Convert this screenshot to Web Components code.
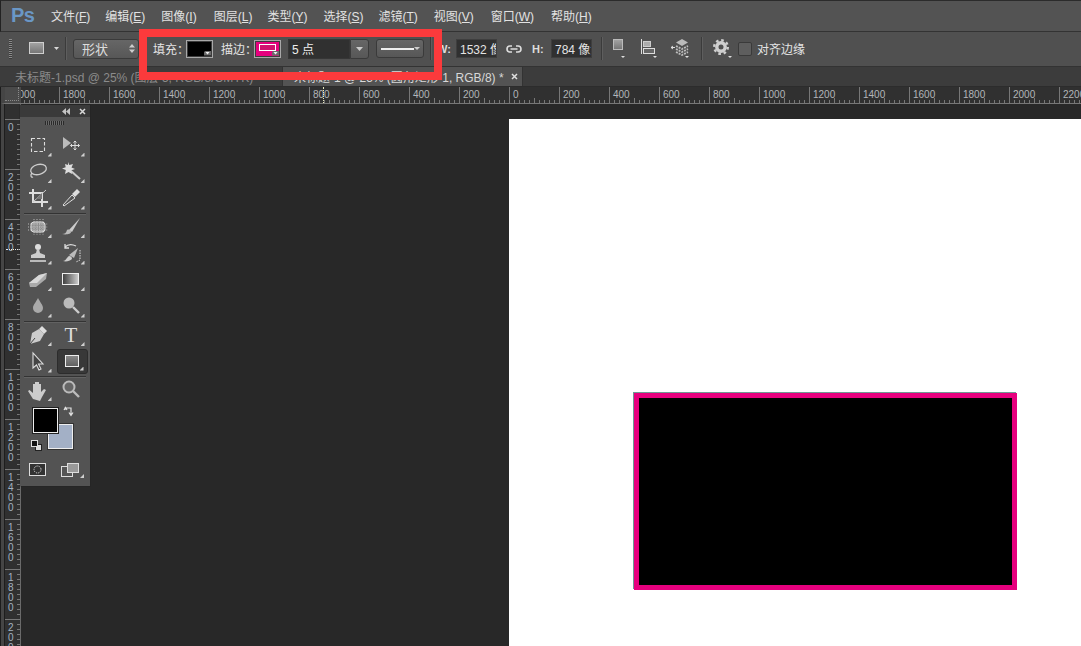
<!DOCTYPE html>
<html lang="zh">
<head>
<meta charset="utf-8">
<title>Photoshop</title>
<style>
  html, body { margin: 0; background: #282828; overflow: hidden; }
</style>
</head>
<body>
<ps-app>
  <ps-menubar></ps-menubar>
  <ps-options></ps-options>
  <ps-tabs></ps-tabs>
  <ps-workspace></ps-workspace>
</ps-app>
<script>
const FONT = '"Liberation Sans", "Noto Sans CJK SC", sans-serif';

class PsApp extends HTMLElement {
  connectedCallback() {
    this.attachShadow({ mode: 'open' });
    this.shadowRoot.innerHTML = `
      <style>
        :host { display: flex; flex-direction: column; position: relative; width: 1081px; height: 646px; overflow: hidden; font-family: ${FONT}; background: #282828; }
        .mark { position: absolute; left: 139px; top: 29px; width: 287px; height: 35px; border: 8px solid #fb3a3c; }
      </style>
      <slot></slot>
      <div class="mark"></div>
    `;
  }
}

class PsMenubar extends HTMLElement {
  connectedCallback() {
    const items = [['文件', 'F', 15], ['编辑', 'E', 16], ['图像', 'I', 17], ['图层', 'L', 15], ['类型', 'Y', 16], ['选择', 'S', 15], ['滤镜', 'T', 16], ['视图', 'V', 17], ['窗口', 'W', 17], ['帮助', 'H', 0]];
    this.attachShadow({ mode: 'open' });
    this.shadowRoot.innerHTML = `
      <style>
        :host { display: flex; align-items: center; box-sizing: border-box; height: 32px; padding-left: 11px; background: #535353; border-top: 1px solid #2b2b2b; border-left: 1px solid #222; border-bottom: 1px solid #333; }
        .logo { width: 40px; margin-left: -1px; margin-top: -2px; color: #6a97c6; font: bold 20px/22px "Liberation Sans", sans-serif; letter-spacing: -0.5px; }
        .item { color: #e2e2e2; font-size: 12px; white-space: nowrap; margin-top: -2px; }
        u { text-underline-offset: 1px; }
      </style>
      <span class="logo">Ps</span>
      ${items.map(i => `<span class="item" style="margin-right:${i[2]}px">${i[0]}(<u>${i[1]}</u>)</span>`).join('')}
    `;
  }
}

const CARET = (x, y) => `<path d="M${x} ${y}h5l-2.500 3z" fill="#d8d8d8"/>`;

class PsOptions extends HTMLElement {
  connectedCallback() {
    this.attachShadow({ mode: 'open' });
    this.shadowRoot.innerHTML = `
      <style>
        :host { display: flex; align-items: center; box-sizing: border-box; height: 35px; padding: 0 0 1px 9px; background: #505050; border-bottom: 1px solid #333; color: #e4e4e4; font-size: 12px; }
        .grip { width: 3px; height: 20px; margin-right: 17px; background: repeating-linear-gradient(#8a8a8a 0 1px, #3a3a3a 1px 2px); }
        .sep { width: 1px; height: 23px; background: #3b3b3b; box-shadow: 1px 0 0 #5e5e5e; }
        svg { display: block; flex: none; }
        .select { box-sizing: border-box; display: flex; align-items: center; justify-content: space-between; height: 20px; border: 1px solid #3a3a3a; border-radius: 3px; background: linear-gradient(#666, #575757); }
        .field { box-sizing: border-box; height: 19px; background: #303030; border: 1px solid #3e3e3e; display: flex; align-items: center; overflow: hidden; white-space: nowrap; }
        .swatch { box-sizing: border-box; position: relative; width: 27px; height: 18px; border: 1px solid #a8a8a8; outline: 1px solid #3c3c3c; outline-offset: -2px; background: #000; }
        .corner { position: absolute; right: 1px; bottom: 1px; width: 7px; height: 5px; background: #6a6a6a; clip-path: polygon(0 100%, 0 30%, 25% 0, 100% 0, 100% 100%); }
        .corner::after { content: ""; position: absolute; left: 1px; top: 1px; width: 5px; height: 3px; background: #eee; clip-path: polygon(0 0, 100% 0, 50% 100%); }
        .label { white-space: nowrap; }
        .check { box-sizing: border-box; width: 14px; height: 14px; border: 1px solid #3a3a3a; border-radius: 2px; background: #5e5e5e; }
      </style>
      <div class="grip"></div>
      <svg width="30" height="20" viewBox="0 0 30 20" style="margin-right:6px">
        <defs><linearGradient id="g1" x1="0" y1="0" x2="0" y2="1"><stop offset="0" stop-color="#a4a4a4"/><stop offset="1" stop-color="#747474"/></linearGradient></defs>
        <rect x="0.500" y="3.500" width="14" height="11" fill="url(#g1)" stroke="#cfcfcf"/>${CARET(25, 8)}
      </svg>
      <div class="sep" style="margin-right:7px"></div>
      <div class="select" style="width:66px;padding:0 3px 0 8px;margin-right:14px"><span style="color:#dcdcdc;font-size:13px">形状</span>
        <svg width="6" height="11" viewBox="0 0 6 11"><path d="M0 4.500 3 1l3 3.500zM0 6.500 3 10l3-3.500z" fill="#ccc"/></svg></div>
      <span class="label" style="width:33px">填充：</span>
      <div class="swatch" style="margin-right:8px"><div class="corner"></div></div>
      <span class="label" style="width:33px">描边：</span>
      <div class="swatch" style="background:#e6007e;margin-right:7px"><div style="box-sizing:border-box;width:17px;height:7px;margin:3px 0 0 4px;border:1px solid #fff;background:#d0126f"></div><div class="corner"></div></div>
      <div class="field" style="width:62px;height:20px;padding-left:3px;border-color:#363636;color:#eee;font-size:12px"><span>5 点</span></div>
      <div class="select" style="width:19px;justify-content:center;border-radius:0 3px 3px 0;margin-right:7px"><svg width="7" height="4"><path d="M0 0h7L3.500 4z" fill="#ccc"/></svg></div>
      <div class="select" style="width:48px;height:19px;padding:0 3px 0 4px;margin-right:6px">
        <div style="width:34px;height:2px;background:#eee"></div><svg width="6" height="4"><path d="M0 0h6L3 3z" fill="#ccc"/></svg></div>
      <div class="sep" style="margin-right:6px"></div>
      <span class="label" style="width:19px;font-weight:bold;font-size:11px;color:#ddd">W:</span>
      <div class="field" style="width:41px;padding-left:3px;margin-right:9px">1532 像素</div>
      <svg width="16" height="10" viewBox="0 0 16 10" style="margin-right:10px"><path d="M6 2H4a3 3 0 0 0 0 6h2M10 2h2a3 3 0 0 1 0 6h-2M4.500 5h7" fill="none" stroke="#ddd" stroke-width="1.600"/></svg>
      <span class="label" style="width:19px;font-weight:bold;font-size:11px;color:#ddd">H:</span>
      <div class="field" style="width:41px;padding-left:3px;margin-right:9px">784 像素</div>
      <div class="sep" style="margin-right:10px"></div>
      <svg width="14" height="22" viewBox="0 0 14 22" style="margin-right:14px"><rect x="1.500" y="1.500" width="9" height="10" fill="url(#g1)" stroke="#bbb"/><path d="M9 18h4l-2 2z" fill="#ddd"/></svg>
      <svg width="19" height="22" viewBox="0 0 19 22" style="margin-right:11px"><path d="M1.500 1v15" stroke="#ddd"/><rect x="3.500" y="3.500" width="7" height="5" fill="#aaa" stroke="#ccc"/><rect x="3.500" y="10.500" width="11" height="5" fill="#666" stroke="#ddd"/><path d="M13 18h4l-2 2z" fill="#ddd"/></svg>
      <svg width="21" height="22" viewBox="0 0 21 22" style="margin-right:10px"><path d="M1 9.500h4M3 8 1 9.500 3 11" stroke="#ddd" fill="none"/><path d="M12 1l6 3.500-6 3.500-6-3.500z" fill="#bbb"/><path d="M6 8l6 3 6-3M6 11l6 3 6-3M6 14l6 3 6-3" fill="none" stroke="#bdbdbd" stroke-width="1.800" stroke-dasharray="2 1"/><path d="M15 18h4l-2 2z" fill="#ddd"/></svg>
      <div class="sep" style="margin-right:11px"></div>
      <svg width="21" height="22" viewBox="0 0 21 22" style="margin-right:4px"><circle cx="8" cy="9" r="4.200" fill="none" stroke="#cfcfcf" stroke-width="3.400"/><circle cx="8" cy="9" r="6.800" fill="none" stroke="#cfcfcf" stroke-width="2.400" stroke-dasharray="2.600 2.740"/><path d="M15 18h4l-2 2z" fill="#ddd"/></svg>
      <div class="check" style="margin-right:5px"></div>
      <span class="label">对齐边缘</span>
    `;
  }
}

class PsTabs extends HTMLElement {
  connectedCallback() {
    this.attachShadow({ mode: 'open' });
    this.shadowRoot.innerHTML = `
      <style>
        :host { display: flex; box-sizing: border-box; height: 20px; background: #3c3c3c; border-bottom: 1px solid #2c2c2c; font-size: 12px; white-space: nowrap; }
        .tab { box-sizing: border-box; display: flex; align-items: center; height: 19px; }
        .off { width: 282px; padding-left: 15px; color: #8b8b8b; overflow: hidden; }
        .on { width: 241px; padding-left: 11px; background: #535353; color: #d8d8d8; border-left: 1px solid #333; border-right: 1px solid #333; }
        svg { margin-left: 7px; }
      </style>
      <div class="tab off">未标题-1.psd @ 25% (图层 5, RGB/8/CMYK)</div>
      <div class="tab on">未标题-1 @ 25% (圆角矩形 1, RGB/8) *<svg width="7" height="7" viewBox="0 0 7 7"><path d="M1 1l5 5M6 1 1 6" stroke="#e0e0e0" stroke-width="1.500"/></svg></div>
    `;
  }
}

class PsRuler extends HTMLElement {
  connectedCallback() {
    const vertical = this.hasAttribute('vertical');
    const values = this.getAttribute('values').split(',');
    const cell = v => vertical
      ? `<div class="cell"><div class="num">${v.split('').map(d => `<span>${d}</span>`).join('')}</div></div>`
      : `<div class="cell"><span class="num">${v}</span></div>`;
    this.attachShadow({ mode: 'open' });
    this.shadowRoot.innerHTML = vertical ? `
      <style>
        :host { display: flex; flex-direction: column; box-sizing: border-box; width: 16px; overflow: hidden; background: #303030; border-right: 1px solid #6a6a6a; color: #a3b2c0; font: 10px/10px "Liberation Sans", sans-serif; }
        .cell { box-sizing: border-box; flex: 0 0 50px; padding: 3px 0 0 3px; border-top: 1px solid #777;
          background: repeating-linear-gradient(#0000 0 4px, #777 4px 5px) right top / 3px 100% no-repeat; }
        .num span { display: block; height: 10px; }
      </style>
      <div style="flex:0 0 15px"></div>
      ${values.map(cell).join('')}
    ` : `
      <style>
        :host { display: flex; flex: 1; box-sizing: border-box; height: 17px; overflow: hidden; background: #303030; border-bottom: 1px solid #777; color: #b2b6ba; font: 10px/10px "Liberation Sans", sans-serif; }
        .cell { box-sizing: border-box; flex: 0 0 50px; padding: 3px 0 0 3px; border-left: 1px solid #777;
          background: linear-gradient(#777, #777) 24px 100% / 1px 5px no-repeat,
            repeating-linear-gradient(90deg, #0000 0 4px, #777 4px 5px) left bottom / 100% 3px no-repeat; }
      </style>
      <div style="flex:0 0 0;margin-left:-12px"></div>
      ${values.map(cell).join('')}
    `;
  }
}

const TOOL_ICONS = {
  marquee: '<rect x="4.500" y="4.500" width="13" height="13" fill="none" stroke="#ddd" stroke-width="1.100" stroke-dasharray="3.500 2"/>',
  move: '<path d="M3 3v12l8-6z" fill="#bbb"/><path d="M15 7v9M10.500 11.500h9M13.500 8.500 15 7l1.500 1.500M13.500 14.500 15 16l1.500-1.500M12 10l-1.500 1.500L12 13M18 10l1.500 1.500L18 13" fill="none" stroke="#ddd"/>',
  lasso: '<ellipse cx="11.500" cy="8.500" rx="8" ry="5" transform="rotate(-14 11.500 8.500)" fill="none" stroke="#ccc" stroke-width="1.300"/><path d="M5 12c-2 2-1 5 1 4" fill="none" stroke="#ccc" stroke-width="1.300"/>',
  wand: '<path d="M11 10l9 8" stroke="#ccc" stroke-width="2"/><path d="M8 1l1.300 3L13 3l-1.500 3.500L15 8l-3.500 1.300L12 13 8.500 11 5 13l.8-4L2 7.500l3.700-1.200L5 3l3 1z" fill="#ddd"/>',
  crop: '<path d="M6 2v13h15M2 6h13v14" fill="none" stroke="#ddd" stroke-width="2"/><path d="M6 15 19 3" stroke="#ccc"/><path d="M9 12h6V6z" fill="#777"/>',
  dropper: '<path d="M4 19l-1-1 9-10 3 3z" fill="#555" stroke="#ddd"/><path d="M12 7l5-5 3 3-5 5z" fill="#ddd"/>',
  heal: '<rect x="4" y="6" width="14" height="10" rx="3" fill="#8e8e8e" stroke="#ddd"/><path d="M7 3v16M10 3v16M13 3v16M16 3v16M1 8h20M1 11h20M1 14h20" stroke="#e4e4e4" stroke-dasharray="1 1.200" opacity=".7"/>',
  brush: '<path d="M9 14 20 2l-8 14z" fill="#ccc"/><path d="M2 18c3 0 4-1 5-4 2-1 4 0 4 2 0 2-5 3-9 2z" fill="#bbb"/>',
  stamp: '<circle cx="11" cy="5" r="3" fill="#ddd"/><path d="M10 7h2l1 4 5 2v3H4v-3l5-2z" fill="#ccc"/><path d="M3 19h16" stroke="#ddd" stroke-width="1.500"/>',
  history: '<path d="M5 5c4-4 9-2 11-1M5 2v4h4" fill="none" stroke="#ddd" stroke-width="1.300"/><path d="M9 13 18 6l-4 10z" fill="#bbb"/><path d="M3 19c3 0 3-3 6-5 2 0 3 1 3 3-2 2-6 3-9 2z" fill="#ccc"/><path d="M20 8v10l-4 2" fill="none" stroke="#ddd" stroke-dasharray="1.500 1"/>',
  eraser: '<path d="M2 14 12 6l8-2-1 6-10 8H3z" fill="#aaa"/><path d="M2 14h8L20 4l-8 2z" fill="#d8d8d8"/>',
  gradient: '<defs><linearGradient id="gr" x1="0" x2="1"><stop offset="0" stop-color="#3c3c3c"/><stop offset="1" stop-color="#cfcfcf"/></linearGradient></defs><rect x="2.500" y="4.500" width="16" height="11" fill="url(#gr)" stroke="#eee"/>',
  drop: '<path d="M11 3c2 4 5 7 5 10a5 5 0 0 1-10 0c0-3 3-6 5-10z" fill="#aaa"/>',
  dodge: '<circle cx="9" cy="8" r="5.500" fill="#bbb"/><path d="M13 12l6 6" stroke="#ccc" stroke-width="2.400"/>',
  pen: '<path d="M3 20 5 9l7-4 5 5-4 7z" fill="#ccc"/><path d="M12 5l3-3 5 5-3 3z" fill="#ddd"/><path d="M3 20l5-6" stroke="#444"/>',
  type: '<text x="11" y="18" text-anchor="middle" font-family="Liberation Serif" font-size="21" fill="#ddd">T</text>',
  arrow: '<path d="M6 3v15l3.500-3 2.500 5 2-1-2.500-5H16z" fill="#444" stroke="#ddd" stroke-width="1.100"/>',
  rect: '<defs><linearGradient id="rc" x1="0" y1="0" x2="0" y2="1"><stop offset="0" stop-color="#8a8a8a"/><stop offset="1" stop-color="#5e5e5e"/></linearGradient></defs><rect x="4.500" y="5.500" width="13" height="11" fill="url(#rc)" stroke="#eee"/>',
  hand: '<path d="M6 20 1 12l1.500-1L6 14V5h2v6V3h2v8V3h2v8V5h2v8l3-3 2 1-4 7-2 4z" fill="#ccc"/>',
  zoom: '<circle cx="9" cy="8" r="5.500" fill="#666" stroke="#bbb" stroke-width="2"/><path d="M13 12l6 6" stroke="#bbb" stroke-width="2.400"/>'
};

class PsTool extends HTMLElement {
  connectedCallback() {
    const icon = TOOL_ICONS[this.getAttribute('icon')];
    const corner = this.hasAttribute('corner') ? '<i></i>' : '';
    this.attachShadow({ mode: 'open' });
    this.shadowRoot.innerHTML = `
      <style>
        :host { display: flex; align-items: center; justify-content: center; position: relative; height: 26.500px; }
        :host([active]) { box-sizing: border-box; background: #383838; border: 1px solid #2c2c2c; border-radius: 3px; margin: 1px 0 1px 2px; height: 24.500px; }
        svg { display: block; }
        i { position: absolute; right: 3px; bottom: 2px; width: 4px; height: 4px; background: #cfcfcf; clip-path: polygon(100% 0, 100% 100%, 0 100%); }
      </style>
      <svg width="22" height="22" viewBox="0 0 22 22">${icon}</svg>${corner}
    `;
  }
}

class PsToolbar extends HTMLElement {
  connectedCallback() {
    const groups = [
      ['marquee', 'move', 'lasso', 'wand', 'crop', 'dropper'],
      ['heal', 'brush', 'stamp', 'history', 'eraser', 'gradient', 'drop', 'dodge'],
      ['pen', 'type', 'arrow', 'rect'],
      ['hand', 'zoom']
    ];
    const noCorner = ['zoom'];
    const html = groups.map(g => `<div class="grid">${g.map(n =>
      `<ps-tool icon="${n}" ${noCorner.includes(n) ? '' : 'corner'} ${n === 'rect' ? 'active' : ''}></ps-tool>`).join('')}</div>`).join('<div class="line"></div>');
    this.attachShadow({ mode: 'open' });
    this.shadowRoot.innerHTML = `
      <style>
        :host { display: block; position: absolute; left: 19px; top: 18px; width: 70px; height: 381px; background: #535353; box-shadow: 0 0 1px #1c1c1c; }
        .head { display: flex; justify-content: flex-end; align-items: center; gap: 9px; box-sizing: border-box; height: 12px; padding-right: 4px; background: #3a3a3a; }
        .grip { width: 19px; height: 4px; margin: 4px 0 7px 25px; background: repeating-linear-gradient(90deg, #2a2a2a 0 1px, #6a6a6a 1px 2px); }
        .grid { display: grid; grid-template-columns: 33px 33px; padding-left: 1.500px; }
        .line { height: 1px; margin: 1px 4px 0; background: #333; box-shadow: 0 1px 0 #626262; }
        .colors { position: relative; height: 60px; }
        .fg, .bg { position: absolute; box-sizing: border-box; width: 25px; height: 25px; border: 1px solid #eee; }
        .fg { left: 13px; top: 5px; background: #000; z-index: 1; box-shadow: 0 0 0 1px #222; }
        .bg { left: 28px; top: 21px; background: #a3b0c6; box-shadow: 0 0 0 1px #333; }
        .swap { position: absolute; left: 43px; top: 3px; }
        .dft { position: absolute; left: 11px; top: 37px; }
        .modes { display: flex; justify-content: space-between; align-items: flex-start; position: relative; padding: 0 11px 0 9px; }
        .modes i { position: absolute; right: 6px; bottom: -1px; width: 4px; height: 4px; background: #cfcfcf; clip-path: polygon(100% 0, 100% 100%, 0 100%); }
        svg { display: block; }
      </style>
      <div class="head">
        <svg width="8" height="7" viewBox="0 0 8 7"><path d="M4 0v7L0 3.500zM8 0v7L4 3.500z" fill="#c4c4c4"/></svg>
        <svg width="7" height="7" viewBox="0 0 7 7"><path d="M1 1l5 5M6 1 1 6" stroke="#d8d8d8" stroke-width="1.500"/></svg>
      </div>
      <div class="grip"></div>
      ${html}
      <div class="colors">
        <div class="fg"></div><div class="bg"></div>
        <svg class="swap" width="12" height="12" viewBox="0 0 12 12"><path d="M2 4V2h6v6M1 4l1.500-2.500L4 4M6 6.500l2 3 2-3" fill="none" stroke="#e0e0e0" stroke-width="1.200"/></svg>
        <svg class="dft" width="11" height="11" viewBox="0 0 11 11"><rect x="4.500" y="4.500" width="6" height="6" fill="#ddd" stroke="#222"/><rect x="0.500" y="0.500" width="6" height="6" fill="#111" stroke="#ddd"/></svg>
      </div>
      <div class="modes">
        <svg width="17" height="13" viewBox="0 0 17 13"><rect x="0.500" y="0.500" width="16" height="12" fill="#333" stroke="#ddd"/><circle cx="8.500" cy="6.500" r="3.500" fill="none" stroke="#eee" stroke-dasharray="1 1"/></svg>
        <svg width="18" height="14" viewBox="0 0 18 14"><rect x="0.500" y="3.500" width="11" height="10" fill="#555" stroke="#ddd"/><rect x="6.500" y="0.500" width="11" height="9" fill="#999" stroke="#ddd"/></svg>
        <i></i>
      </div>
    `;
  }
}

class PsDocument extends HTMLElement {
  connectedCallback() {
    this.attachShadow({ mode: 'open' });
    this.shadowRoot.innerHTML = `
      <style>
        :host { display: block; box-sizing: border-box; height: 100%; margin-left: 488px; padding: 274px 0 0 125px; background: #fff; }
        .shape { box-sizing: border-box; width: 383px; height: 197px; background: #000; border: 5px solid #e6007e; box-shadow: -1px -1px 0 #6f9a94; }
      </style>
      <div class="shape"></div>
    `;
  }
}

class PsWorkspace extends HTMLElement {
  connectedCallback() {
    const left = [2000, 1800, 1600, 1400, 1200, 1000, 800, 600, 400, 200, 0];
    const right = [200, 400, 600, 800, 1000, 1200, 1400, 1600, 1800, 2000, 2200];
    this.attachShadow({ mode: 'open' });
    this.shadowRoot.innerHTML = `
      <style>
        :host { display: flex; flex-direction: column; flex: 1; min-height: 0; position: relative; background: #282828; border-left: 1px solid #1c1c1c; }
        .top { display: flex; height: 17px; }
        .corner { box-sizing: border-box; width: 20px; border-left: 4px solid #454545; background: #4a4a4a; border-bottom: 1px solid #777; position: relative; }
        .corner::after { content: ""; position: absolute; left: 0; top: 0; width: 13px; height: 13px; border-right: 1px dotted #8a8a8a; border-bottom: 1px dotted #8a8a8a; }
        .main { display: flex; flex: 1; min-height: 0; }
        .strip { width: 4px; background: #454545; border-right: 1px solid #1e1e1e; box-sizing: border-box; }
        .canvas { flex: 1; min-width: 0; padding-top: 15px; }
        .guide-x { position: absolute; left: 322px; top: 0; height: 16px; border-left: 1px dotted #e8e8c0; }
        .guide-y { position: absolute; left: 5px; top: 162px; width: 14px; border-top: 1px dotted #e8e8e8; }
      </style>
      <div class="top"><div class="corner"></div><ps-ruler values="${[...left, ...right].join(',')}"></ps-ruler></div>
      <div class="main">
        <div class="strip"></div>
        <ps-ruler vertical values="0,200,400,600,800,1000,1200,1400,1600,1800,2000"></ps-ruler>
        <div class="canvas"><ps-document></ps-document></div>
      </div>
      <div class="guide-x"></div>
      <div class="guide-y"></div>
      <ps-toolbar></ps-toolbar>
    `;
  }
}

customElements.define('ps-app', PsApp);
customElements.define('ps-menubar', PsMenubar);
customElements.define('ps-options', PsOptions);
customElements.define('ps-tabs', PsTabs);
customElements.define('ps-ruler', PsRuler);
customElements.define('ps-tool', PsTool);
customElements.define('ps-toolbar', PsToolbar);
customElements.define('ps-document', PsDocument);
customElements.define('ps-workspace', PsWorkspace);
</script>
</body>
</html>
